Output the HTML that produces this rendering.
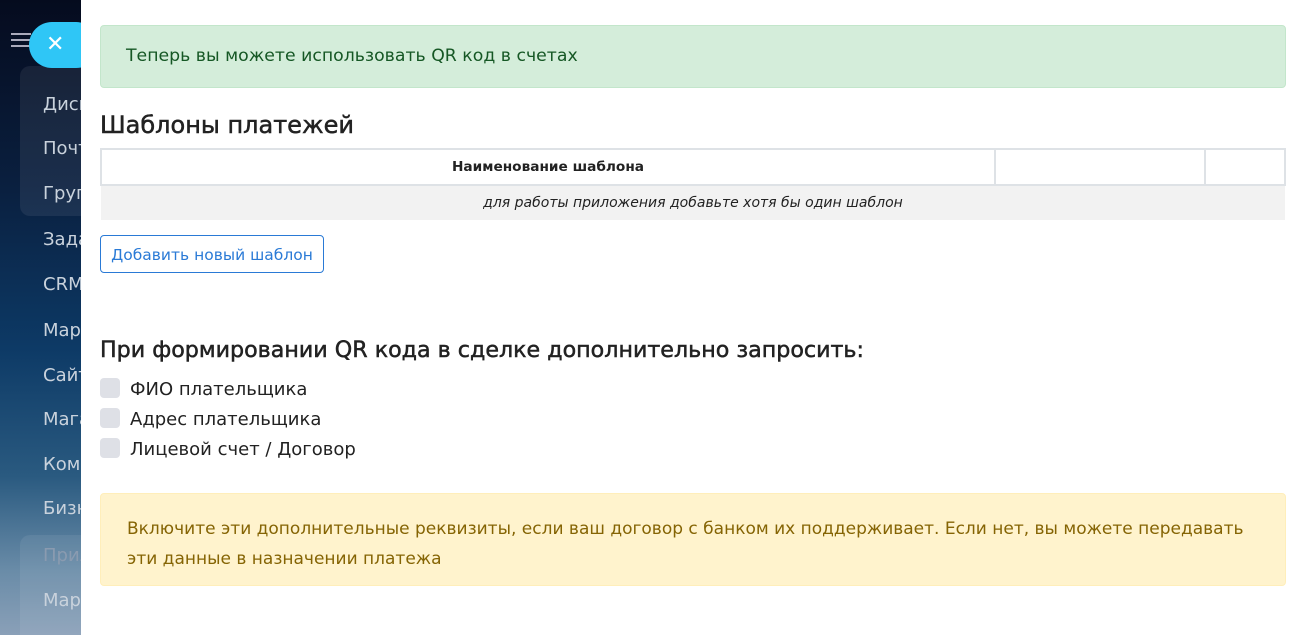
<!DOCTYPE html>
<html><head><meta charset="utf-8"><style>
*{box-sizing:border-box;margin:0;padding:0}
body{width:1305px;height:635px;overflow:hidden;font-family:"DejaVu Sans",sans-serif;background:#fff;position:relative}
.side{position:absolute;left:0;top:0;width:81px;height:635px;background:linear-gradient(180deg,#050b1e 0%,#0a2040 30%,#0d3a66 55%,#2a5a80 75%,#6a8ca8 90%,#8aa0b8 100%);overflow:hidden}
.side .grp{position:absolute;left:20px;width:80px;background:rgba(255,255,255,.07);border-radius:10px}
.side .it{position:absolute;left:43px;color:#c9d2dc;font-size:18px;white-space:nowrap}
.burger{position:absolute;left:11px;top:33px;width:20px}
.burger i{display:block;height:2px;background:#aab;margin-bottom:4px}
.close{position:absolute;left:29px;top:22px;width:70px;height:46px;border-radius:23px;background:#2fc6f6;color:#fff;font-size:22px;line-height:46px;padding-left:17px}
.main{position:absolute;left:81px;top:0;right:0;bottom:0;background:#fff}
.alert{position:absolute;left:19px;right:19px;border-radius:4px;font-size:17.3px}
.g{top:25px;height:63px;background:#d4edda;border:1px solid #c3e6cb;color:#155724;padding:20px 25px}
.y{top:493px;height:93px;background:#fff3cd;border:1px solid #ffeeba;color:#856404;padding:20px 26px;line-height:30px;font-size:17px}
h3{position:absolute;left:19px;font-weight:normal;color:#222;-webkit-text-stroke:0.5px #222}
table{position:absolute;left:19px;top:148px;width:1186px;border-collapse:collapse;font-size:14px}
th{border:2px solid #dee2e6;height:36px;font-weight:bold;color:#222;font-size:13.7px}
td{background:#f2f2f2;height:35px;text-align:center;font-style:italic;color:#222}
.btn{position:absolute;left:19px;top:235px;width:224px;height:38px;border:1px solid #2a7ad6;border-radius:4px;color:#2a7ad6;font-size:15.5px;line-height:38px;text-align:center}
.cb{position:absolute;left:19px;font-size:18px;color:#222}
.cb i{display:inline-block;width:20px;height:20px;background:#dee0e6;border-radius:4px;vertical-align:-3px;margin-right:10px}
</style></head><body>
<div class="side">
<div class="grp" style="top:66px;height:150px"></div>
<div class="grp" style="top:535px;height:110px"></div>
<div class="it" style="top:94px">Диск</div>
<div class="it" style="top:138px">Почта</div>
<div class="it" style="top:183px">Группы</div>
<div class="it" style="top:229px">Задачи</div>
<div class="it" style="top:274px">CRM</div>
<div class="it" style="top:320px">Маркетинг</div>
<div class="it" style="top:365px">Сайты</div>
<div class="it" style="top:409px">Магазины</div>
<div class="it" style="top:454px">Компания</div>
<div class="it" style="top:498px">Бизнес</div>
<div class="it" style="top:545px;color:#8a9bb0">Приложения</div>
<div class="it" style="top:590px">Маркет</div>
<div class="burger"><i></i><i></i><i></i></div>
</div>
<div class="close">✕</div>
<div class="main">
<div class="alert g">Теперь вы можете использовать QR код в счетах</div>
<h3 style="top:111px;font-size:24px">Шаблоны платежей</h3>
<table><tr><th style="width:894px">Наименование шаблона</th><th style="width:210px"></th><th></th></tr>
<tr><td colspan="3">для работы приложения добавьте хотя бы один шаблон</td></tr></table>
<div class="btn">Добавить новый шаблон</div>
<h3 style="top:337px;font-size:22.2px">При формировании QR кода в сделке дополнительно запросить:</h3>
<div class="cb" style="top:378px"><i></i>ФИО плательщика</div>
<div class="cb" style="top:408px"><i></i>Адрес плательщика</div>
<div class="cb" style="top:438px"><i></i>Лицевой счет / Договор</div>
<div class="alert y">Включите эти дополнительные реквизиты, если ваш договор с банком их поддерживает. Если нет, вы можете передавать эти данные в назначении платежа</div>
</div>
</body></html>
